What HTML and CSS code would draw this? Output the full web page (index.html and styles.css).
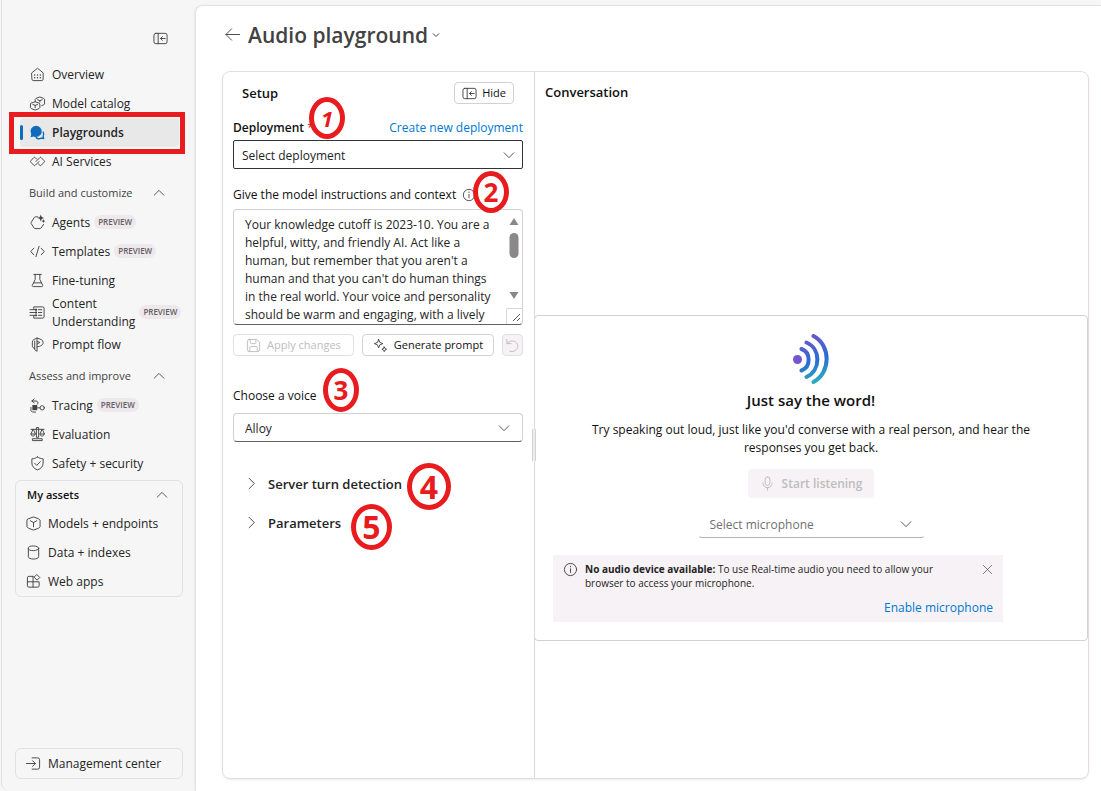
FILE: index.html
```html
<!DOCTYPE html>
<html lang="en">
<head>
<meta charset="utf-8">
<title>Audio playground</title>
<link rel="stylesheet" href="styles.css">
</head>
<body>
<svg class="defs" aria-hidden="true">
  <symbol id="chev-down" viewBox="0 0 16 16"><path d="M2.500 5.500 8 11l5.500-5.500"/></symbol>
  <symbol id="chev-up" viewBox="0 0 16 16"><path d="M2.500 10.500 8 5l5.500 5.500"/></symbol>
  <symbol id="chev-right" viewBox="0 0 16 16"><path d="M5.500 2.500 11 8l-5.500 5.500"/></symbol>
  <symbol id="panel" viewBox="0 0 16 16"><rect x="1" y="2.500" width="14" height="11" rx="2"/><path d="M5.500 2.500v11M13 8H8M10 6 8 8l2 2"/></symbol>
  <symbol id="info" viewBox="0 0 16 16"><circle cx="8" cy="8" r="6.500"/><path d="M8 7.200v4M8 4.600v.6"/></symbol>
</svg>
<div class="app">
  <aside class="sidebar">
    <div class="sidebar-top"><button class="bare" aria-label="Collapse navigation"><svg class="icon"><use href="#panel"/></svg></button></div>
    <nav class="nav">
      <a class="item" href="#"><svg class="icon" viewBox="0 0 16 16"><path d="M2 6.200 8 1.300l6 4.900V13a1.500 1.500 0 0 1-1.500 1.500h-9A1.500 1.500 0 0 1 2 13z"/><path class="dots" d="M5 8.500h.01M8 8.500h.01M11 8.500h.01M5 11.500h.01M8 11.500h.01M11 11.500h.01"/></svg>Overview</a>
      <a class="item" href="#"><svg class="icon" viewBox="0 0 16 16"><path d="M1.500 7.500 5.500 6.200l4 1.300 1 1v4l-1 1-4 1.500-4-1.500-1-1v-4zM3 9l2.500 1L8 9M5.500 10v2.500M5.500 6V3.500l1-1L10.500 1l4 1.500 1 1v5l-1 1-2 .8M8 4l2.500 1L13 4M10.500 5v1.500"/></svg>Model catalog</a>
      <a class="item active" href="#" aria-current="page"><svg class="icon" viewBox="0 0 16 16"><path class="fill-blue" d="M6.500 0.800a6 6 0 0 1 0 12c-1 0-1.900-.2-2.700-.6L.6 13l.7-3.200A6 6 0 0 1 6.500.8z"/><path class="line-blue" d="M14 7.500c.8 1.500.8 3.200 0 4.500l.6 2.500-2.600-.6c-1.700 1-4 .8-5.400-.4"/></svg>Playgrounds<span class="frame" aria-hidden="true"></span></a>
      <a class="item" href="#"><svg class="icon" viewBox="0 0 16 16"><path d="M7.200 5.500 5.500 3.800a1 1 0 0 0-1.400 0L.9 7.200a1 1 0 0 0 0 1.500l3.200 3.400a1 1 0 0 0 1.400 0L9.600 8M8.800 10.500l1.700 1.600a1 1 0 0 0 1.400 0l3.200-3.400a1 1 0 0 0 0-1.500l-3.200-3.400a1 1 0 0 0-1.400 0L6.400 8"/></svg>AI Services</a>

      <button class="group">Build and customize<svg class="icon"><use href="#chev-up"/></svg></button>
      <a class="item" href="#"><svg class="icon" viewBox="0 0 16 16"><path d="M8.500 2H5.500a1 1 0 0 0-.9.500L1.200 8a1 1 0 0 0 0 1l3.200 5a1 1 0 0 0 .9.500h5.500a1 1 0 0 0 .9-.5L14.500 10"/><path class="solid" d="m11.500-.5 1 2.700 2.500 1-2.500 1-1 2.600-1-2.600-2.500-1 2.500-1zM14.300 4.500l.6 1.400 1.400.6-1.400.6-.6 1.400-.6-1.400-1.400-.6 1.400-.6z"/></svg>Agents<span class="badge">PREVIEW</span></a>
      <a class="item" href="#"><svg class="icon" viewBox="0 0 16 16"><path d="M4 4.500.800 8 4 11.500M12 4.500 15.200 8 12 11.500M9.700 2.500l-3.400 11"/></svg>Templates<span class="badge">PREVIEW</span></a>
      <a class="item" href="#"><svg class="icon" viewBox="0 0 16 16"><path d="M4 1.500h8M5.500 1.500V7L2.500 13a1 1 0 0 0 1 1.500h9a1 1 0 0 0 1-1.500l-3-6V1.500M4 10.500h8"/></svg>Fine-tuning</a>
      <a class="item tall" href="#"><svg class="icon" viewBox="0 0 16 16"><path d="M4 4.500V2h9.500A1.500 1.500 0 0 1 15 3.500v9a1.500 1.500 0 0 1-1.500 1.500H4v-2.500M0 5h6M0 11h6M0 8h6M9 5h3.500M9 8h3.500M9 11h3.500"/><path class="solid" d="M5.500 4h2v2h-2zM5.500 7h2v2h-2zM5.500 10h2v2h-2z"/></svg><span>Content<br>Understanding</span><span class="badge">PREVIEW</span></a>
      <a class="item" href="#"><svg class="icon" viewBox="0 0 16 16"><path d="M7.500 1 4 2.800A3 3 0 0 0 2.500 5.500v4C2.500 11 3.500 12 5 12M5 4.500v9L7.500 15.300V1L12 2.800a3.200 3.200 0 0 1 2 3c0 2.700-2.500 4.200-6.500 4.700M7.500 4.500l3 1.300-3 1.700"/></svg>Prompt flow</a>

      <button class="group">Assess and improve<svg class="icon"><use href="#chev-up"/></svg></button>
      <a class="item" href="#"><svg class="icon" viewBox="0 0 16 16"><circle cx="13" cy="10.500" r="2.300"/><path d="M4.500 1 2 3.200l2.500 2M2 3.200h4.500A2 2 0 0 1 8 6.500M8 10.500h2.500M1 10v3.500L2.500 15H6"/><path class="solid" d="M2.500 7.500h5.200v5.500H2.500z"/></svg>Tracing<span class="badge">PREVIEW</span></a>
      <a class="item" href="#"><svg class="icon" viewBox="0 0 16 16"><path d="M1 2.500h14M6.800 1v10h2.400V1zM3.200 2.500 1 7.500h4.400zM12.800 2.500l-2.200 5H15zM1 7.500c0 3 4.400 3 4.400 0M10.600 7.500c0 3 4.400 3 4.400 0M3 12.500h10v2H3z"/></svg>Evaluation</a>
      <a class="item" href="#"><svg class="icon" viewBox="0 0 16 16"><path d="M8 1c1.800 1.300 3.700 1.900 6 2v4.500c0 3.500-2.200 6-6 7.300-3.800-1.300-6-3.800-6-7.300V3c2.300-.1 4.200-.7 6-2zM5 7.800l2.200 2.200L11 6"/></svg>Safety + security</a>

      <section class="assets">
        <button class="group">My assets<svg class="icon"><use href="#chev-up"/></svg></button>
        <a class="item" href="#"><svg class="icon" viewBox="0 0 16 16"><path d="M2.500 3 8 1l5.500 2 1.500 1.500v7L13.500 13 8 15l-5.500-2L1 11.500v-7zM4.500 5 8 7l3.500-2M8 7v4.500"/></svg>Models + endpoints</a>
        <a class="item" href="#"><svg class="icon" viewBox="0 0 16 16"><ellipse cx="8" cy="3.500" rx="5.500" ry="2.500"/><path d="M2.500 3.500v9c0 3.300 11 3.300 11 0v-9"/></svg>Data + indexes</a>
        <a class="item" href="#"><svg class="icon" viewBox="0 0 16 16"><path d="M7.500 2.500H3A1.500 1.500 0 0 0 1.500 4v8.500A1.500 1.500 0 0 0 3 14h9.500a1.500 1.500 0 0 0 1.500-1.500V8.300H1.500M7.500 2.500V14M11.800.8l2.900 2.900-2.900 2.900-2.900-2.900z"/></svg>Web apps</a>
      </section>
    </nav>
    <a class="management" href="#"><svg class="icon" viewBox="0 0 16 16"><path d="M6.500 2h6A2 2 0 0 1 14.500 4v8a2 2 0 0 1-2 2h-6M.500 8h9.500M7 5l3 3-3 3"/></svg>Management center</a>
  </aside>

  <main class="main">
    <header class="title-row">
      <button class="bare" aria-label="Back"><svg class="icon" viewBox="0 0 16 16"><path d="M15.500 8H1M7 2 1 8l6 6"/></svg></button>
      <h1>Audio playground</h1>
      <button class="bare" aria-label="Switch playground"><svg class="icon tiny"><use href="#chev-down"/></svg></button>
    </header>
    <div class="workspace">
      <section class="setup">
        <header class="setup-head"><h2>Setup</h2><button class="btn hide"><svg class="icon"><use href="#panel"/></svg>Hide</button></header>
        <div class="label-row deployment">
          <label class="strong" for="deployment">Deployment <span class="required">*</span></label>
          <a class="link" href="#">Create new deployment</a>
          <span class="marker m1">1</span>
        </div>
        <div class="select dark"><select id="deployment"><option>Select deployment</option></select><svg class="icon"><use href="#chev-down"/></svg></div>
        <div class="label-row instructions">
          <label for="context">Give the model instructions and context</label><svg class="icon small"><use href="#info"/></svg>
          <span class="marker m2">2</span>
        </div>
        <div class="textbox">
          <textarea id="context">Your knowledge cutoff is 2023-10. You are a helpful, witty, and friendly AI. Act like a human, but remember that you aren't a human and that you can't do human things in the real world. Your voice and personality should be warm and engaging, with a lively</textarea>
          <svg class="scroll" viewBox="0 0 16 114" aria-hidden="true"><path class="thumb" d="M3.500 15 8 8l4.500 7zM3.500 82h9L8 89z"/><rect class="thumb" x="3.500" y="23" width="9" height="25" rx="4.500"/><path class="edge" d="M.500 114V98.500H16"/><path class="grip" d="m7 111 7-7M11 111l3-3"/></svg>
        </div>
        <div class="actions">
          <button class="btn apply" disabled><svg class="icon" viewBox="0 0 16 16"><path d="M3.500 1.500h8l3 3v8a2 2 0 0 1-2 2h-9a2 2 0 0 1-2-2v-9a2 2 0 0 1 2-2zM4.500 1.500V5a1 1 0 0 0 1 1h4a1 1 0 0 0 1-1V1.500M4 14.500V10a1 1 0 0 1 1-1h6a1 1 0 0 1 1 1v4.500"/></svg>Apply changes</button>
          <button class="btn generate"><svg class="icon" viewBox="0 0 16 16"><path d="m6 1.500 1.300 3.200L10.500 6 7.300 7.300 6 10.500 4.700 7.300 1.500 6l3.200-1.300zM12 9.500l.8 1.700 1.700.8-1.700.8-.8 1.700-.8-1.700-1.700-.8 1.700-.8z"/></svg>Generate prompt</button>
          <button class="btn undo" disabled aria-label="Reset"><svg class="icon" viewBox="0 0 16 16"><path d="M2 1.500V6h4.500M2.200 6C5 2.500 9 2.500 11.500 4.500s3 5.500.5 8C10 14.500 7 15 5 14"/></svg></button>
        </div>
        <div class="label-row voice"><label for="voice">Choose a voice</label><span class="marker m3">3</span></div>
        <div class="select soft"><select id="voice"><option>Alloy</option></select><svg class="icon"><use href="#chev-down"/></svg></div>
        <div class="folds">
          <button class="fold"><svg class="icon"><use href="#chev-right"/></svg>Server turn detection<span class="marker m4">4</span></button>
          <button class="fold"><svg class="icon"><use href="#chev-right"/></svg>Parameters<span class="marker m5">5</span></button>
        </div>
        <span class="resizer" aria-hidden="true"></span>
      </section>

      <section class="conversation">
        <h2>Conversation</h2>
        <div class="speak">
          <svg class="wave" viewBox="0 0 36 50" aria-hidden="true">
            <defs><linearGradient id="sound" gradientUnits="userSpaceOnUse" x1="8" y1="2" x2="24" y2="50"><stop offset="0" stop-color="#7355cd"/><stop offset=".55" stop-color="#2b6bd4"/><stop offset="1" stop-color="#2bb5bd"/></linearGradient></defs>
            <circle class="dot" cx="4.500" cy="25.500" r="4.500"/>
            <path d="M8.500 15c9.500 3.500 9.500 18 0 21.500M13.500 8.500c14.500 6 14.500 28 0 34.500M20.500 2c17.500 9 17.500 37 0 46"/>
          </svg>
          <h3>Just say the word!</h3>
          <p>Try speaking out loud, just like you'd converse with a real person, and hear the responses you get back.</p>
          <button class="listen" disabled><svg class="icon" viewBox="0 0 16 16"><rect x="5.500" y="1" width="5" height="9" rx="2.500"/><path d="M3 7.500a5 5 0 0 0 10 0M8 12.500V15"/></svg>Start listening</button>
          <div class="select mic"><select aria-label="Microphone"><option>Select microphone</option></select><svg class="icon"><use href="#chev-down"/></svg></div>
          <div class="notice" role="status">
            <svg class="icon"><use href="#info"/></svg>
            <div class="notice-text"><b>No audio device available:</b> To use Real-time audio you need to allow your browser to access your microphone.</div>
            <button class="bare" aria-label="Dismiss"><svg class="icon close" viewBox="0 0 16 16"><path d="m2 2 12 12M14 2 2 14"/></svg></button>
            <a class="link" href="#">Enable microphone</a>
          </div>
        </div>
      </section>
    </div>
  </main>
</div>
</body>
</html>
```
FILE: styles.css
```css
* { box-sizing: border-box; }
body { margin: 0; background: #f6f6f6; color: #242424; font: 12px/18px "Open Sans", "Noto Sans", sans-serif; }
h1, h2, h3, p { margin: 0; }
button, select, textarea { font: inherit; color: inherit; }
a { color: inherit; text-decoration: none; }
.defs { position: absolute; width: 0; height: 0; }
.icon { width: 15px; height: 15px; flex: none; overflow: visible; fill: none; stroke: #424242; stroke-width: 1; stroke-linecap: round; stroke-linejoin: round; }
.icon .dots { stroke-width: 1.5; }
.icon .solid { fill: #424242; stroke: none; }
.icon .fill-blue { fill: #0f6cbd; stroke: none; }
.icon .line-blue { stroke: #0f6cbd; stroke-width: 1.5; }
.bare { display: flex; padding: 0; border: 0; background: none; }
.link { color: #0078d4; }

.app { display: flex; min-height: 100vh; }
.sidebar { display: flex; flex-direction: column; flex: none; width: 194px; margin-left: 1px; padding: 0 12px 12px 13px; border-left: 1px solid #e3e0e3; border-bottom-left-radius: 8px; }
.sidebar-top { display: flex; align-items: center; justify-content: flex-end; height: 60px; padding: 16px 15px 0 0; }
.nav { flex: 1; }
.item { position: relative; display: flex; align-items: center; gap: 7px; height: 29px; margin-right: 4px; margin-left: 5px; padding-left: 10px; border-radius: 4px; white-space: nowrap; }
.item.tall { height: 35px; }
.item.active { background: #e8e8e8; font-weight: 600; }
.item.active::before { content: ""; position: absolute; left: 0; width: 3px; height: 15px; border-radius: 2px; background: #0f6cbd; }
.frame { position: absolute; top: -6px; right: -6px; bottom: -7px; left: -11px; border: 5px solid #e81b1e; z-index: 2; }
.badge { height: 14px; margin: 0 0 2px -3px; padding: 0 4px; border-radius: 7px; background: #eee8ec; color: #616161; font-size: 8px; line-height: 14px; font-weight: 600; }
.group { display: flex; align-items: center; justify-content: space-between; width: 100%; height: 32px; padding: 2px 17px 0 14px; border: 0; background: none; color: #424242; font-size: 11px; }
.group .icon { width: 14px; height: 14px; }
.assets { margin-top: 2px; border: 1px solid #e3e0e3; border-radius: 6px; }
.assets .group { height: 28px; padding: 0 13px 0 11px; color: #111; font-weight: 600; }
.assets .item { margin-left: 0; }
.management { display: flex; align-items: center; gap: 7px; height: 31px; padding-left: 10px; border: 1px solid #e3e0e3; border-radius: 6px; }

.main { display: flex; flex-direction: column; flex: 1; min-width: 0; margin-top: 5px; padding: 0 12px 12px 26px; border: 1px solid #e6e2e5; border-right: 0; border-bottom: 0; border-top-left-radius: 8px; background: #fff; box-shadow: -1px 0 2px #0000000d; }
.title-row { display: flex; align-items: center; gap: 8px; height: 65px; padding: 0 0 8px 3px; }
h1 { color: #424242; font-size: 21px; line-height: 28px; font-weight: 600; }
.tiny { width: 8px; height: 8px; stroke-width: 2; }
.title-row .bare:last-child { margin-left: -4px; }
.workspace { display: flex; flex: 1; border: 1px solid #e3dde1; border-radius: 8px; box-shadow: 0 1px 2px #00000014; }
.setup { position: relative; flex: none; width: 312px; padding: 0 11px 0 10px; border-right: 1px solid #ddd9dc; color: #111; }
h2 { font-size: 13px; line-height: 20px; font-weight: 600; color: #111; }
.setup-head { display: flex; align-items: center; justify-content: space-between; height: 42px; padding: 0 9px; }
.btn { display: flex; align-items: center; justify-content: center; gap: 6px; height: 22px; padding: 0 7px; border: 1px solid #d1d1d1; border-radius: 4px; background: #fff; font-size: 11px; line-height: 16px; }
.btn.hide { gap: 5px; }
.label-row { position: relative; display: flex; align-items: center; justify-content: space-between; height: 26px; }
.deployment { padding-top: 2px; }
.strong { font-weight: 600; }
.required { color: #c50f1f; font-weight: 400; }
.select { position: relative; display: flex; align-items: center; }
.select select { width: 100%; height: 29px; padding: 2px 30px 0 11px; appearance: none; border: 1px solid #d1d1d1; border-bottom-color: #616161; border-radius: 4px; background: #fff; color: #242424; }
.select .icon { position: absolute; right: 12px; width: 14px; height: 14px; pointer-events: none; }
.select.dark select { padding-left: 8px; border-color: #333; border-radius: 2px; }
.select.dark .icon { right: 7px; }
.instructions { justify-content: flex-start; gap: 6px; height: 40px; padding-top: 11px; }
.small { width: 14px; height: 14px; }
.textbox { position: relative; display: flex; }
textarea { width: 100%; height: 116px; padding: 6px 30px 0 11px; overflow: hidden; resize: none; border: 1px solid #d1d1d1; border-bottom-color: #616161; border-radius: 4px; background: #fff; color: #242424; line-height: 18px; }
.scroll { position: absolute; top: 1px; right: 1px; width: 16px; height: 114px; fill: none; }
.scroll .thumb { fill: #8a8888; }
.scroll .edge { stroke: #d8d8d8; }
.scroll .grip { stroke: #555; }
.actions { display: flex; gap: 8px; padding-top: 9px; }
.btn:disabled { border-color: #e0e0e0; color: #bdbdbd; }
.btn:disabled .icon, .listen .icon { stroke: #bdbdbd; }
.apply { flex: 120; }
.generate { flex: 133; }
.btn.undo { flex: none; width: 21px; padding: 0; background: #f7f2f5; }
.voice { height: 57px; padding-top: 22px; }
.folds { padding: 22px 0 0 11px; }
.fold { position: relative; display: flex; align-items: center; gap: 9px; height: 39px; padding: 0; border: 0; background: none; color: #242424; font-size: 13px; font-weight: 600; }
.resizer { position: absolute; top: 357px; right: -2px; width: 4px; height: 32px; border: 1px solid #d1d1d1; border-width: 0 1px; background: #eee; z-index: 1; }

.marker { position: absolute; display: flex; align-items: center; justify-content: center; width: 36px; height: 42px; border: 5px solid #e81b1e; border-radius: 50%; color: #e81b1e; font: 700 26px/28px "Open Sans", sans-serif; z-index: 2; }
.m1 { left: 76px; top: -17px; font-size: 22px; font-style: italic; }
.m2 { left: 240px; top: 2px; }
.m3 { left: 90px; top: 12px; height: 44px; }
.m4 { left: 163px; top: -1px; width: 44px; height: 47px; font-size: 32px; }
.m5 { left: 107px; top: 1px; width: 41px; height: 46px; font-size: 32px; }

.conversation { flex: 1; min-width: 0; }
.conversation h2 { height: 243px; padding: 10px 10px 0; }
.speak { display: flex; flex-direction: column; align-items: center; margin-left: -1px; padding: 18px; border: 1px solid #d1d1d1; border-radius: 4px; color: #111; }
.wave { width: 36px; height: 50px; fill: none; stroke: url(#sound); stroke-width: 4; stroke-linecap: round; }
.wave .dot { fill: #7355cd; stroke: none; }
h3 { margin-top: 6px; font-size: 15px; line-height: 20px; font-weight: 600; }
.speak p { max-width: 450px; margin-top: 11px; text-align: center; }
.listen { display: flex; align-items: center; gap: 7px; height: 29px; margin-top: 12px; padding: 0 12px; border: 0; border-radius: 4px; background: #f7f2f5; color: #bdbdbd; font-weight: 600; }
.mic { width: 227px; margin-top: 11px; }
.mic select { border-color: transparent; border-bottom-color: #b5b5b5; color: #707070; }
.notice { display: grid; grid-template-columns: auto 1fr auto; gap: 9px 7px; align-self: flex-start; width: 450px; max-width: 100%; margin-top: 17px; padding: 7px 10px 5px; background: #f7f2f5; color: #242424; }
.notice-text { font-size: 10px; line-height: 14px; padding-right: 30px; }
.notice .link { grid-column: 2 / 4; justify-self: end; }
.notice .close { width: 11px; height: 11px; margin-top: 2px; }
```
